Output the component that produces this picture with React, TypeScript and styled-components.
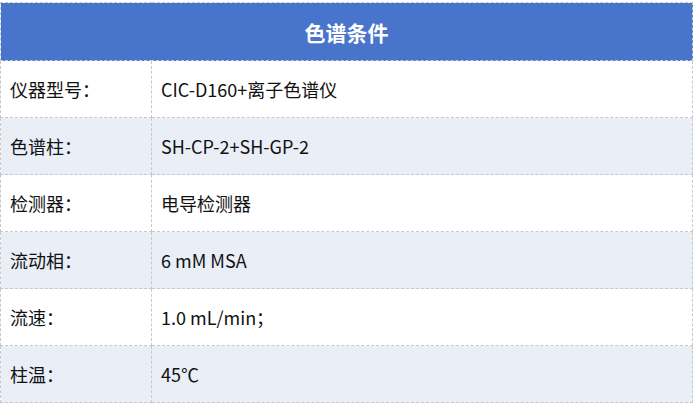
import React from 'react';
import styled, { createGlobalStyle } from 'styled-components';

const GlobalStyle = createGlobalStyle`
  body {
    margin: 0;
    background: #ffffff;
    font-family: "Noto Sans CJK SC", "Noto Sans", sans-serif;
  }
`;

const Wrapper = styled.div`
  padding-top: 2px;
  width: 693px;
`;

const Table = styled.table`
  width: 693px;
  border-collapse: collapse;
  table-layout: fixed;
`;

const LabelCol = styled.col`
  width: 151px;
`;

const HeadCell = styled.th`
  height: 57px;
  padding: 0;
  background: #4874cb;
  color: #ffffff;
  font-size: 21px;
  font-weight: 700;
  text-align: center;
  border: 1px dashed #c4c8d0;
`;

const Row = styled.tr<{ $alt: boolean }>`
  background: ${(p) => (p.$alt ? '#e9eef7' : '#ffffff')};
`;

const Cell = styled.td`
  height: 56px;
  padding: 0 0 0 9px;
  font-size: 18px;
  color: #111111;
  border: 1px dashed #c8c8c8;
  vertical-align: middle;
  white-space: nowrap;
`;

const rows = [
  { label: '仪器型号：', value: 'CIC-D160+离子色谱仪' },
  { label: '色谱柱：', value: 'SH-CP-2+SH-GP-2' },
  { label: '检测器：', value: '电导检测器' },
  { label: '流动相：', value: '6 mM MSA' },
  { label: '流速：', value: '1.0 mL/min；' },
  { label: '柱温：', value: '45℃' },
];

export default function App() {
  return (
    <Wrapper>
      <GlobalStyle />
      <Table>
        <colgroup>
          <LabelCol />
          <col />
        </colgroup>
        <thead>
          <tr>
            <HeadCell colSpan={2}>色谱条件</HeadCell>
          </tr>
        </thead>
        <tbody>
          {rows.map((r, i) => (
            <Row key={r.label} $alt={i % 2 === 1}>
              <Cell>{r.label}</Cell>
              <Cell>{r.value}</Cell>
            </Row>
          ))}
        </tbody>
      </Table>
    </Wrapper>
  );
}
